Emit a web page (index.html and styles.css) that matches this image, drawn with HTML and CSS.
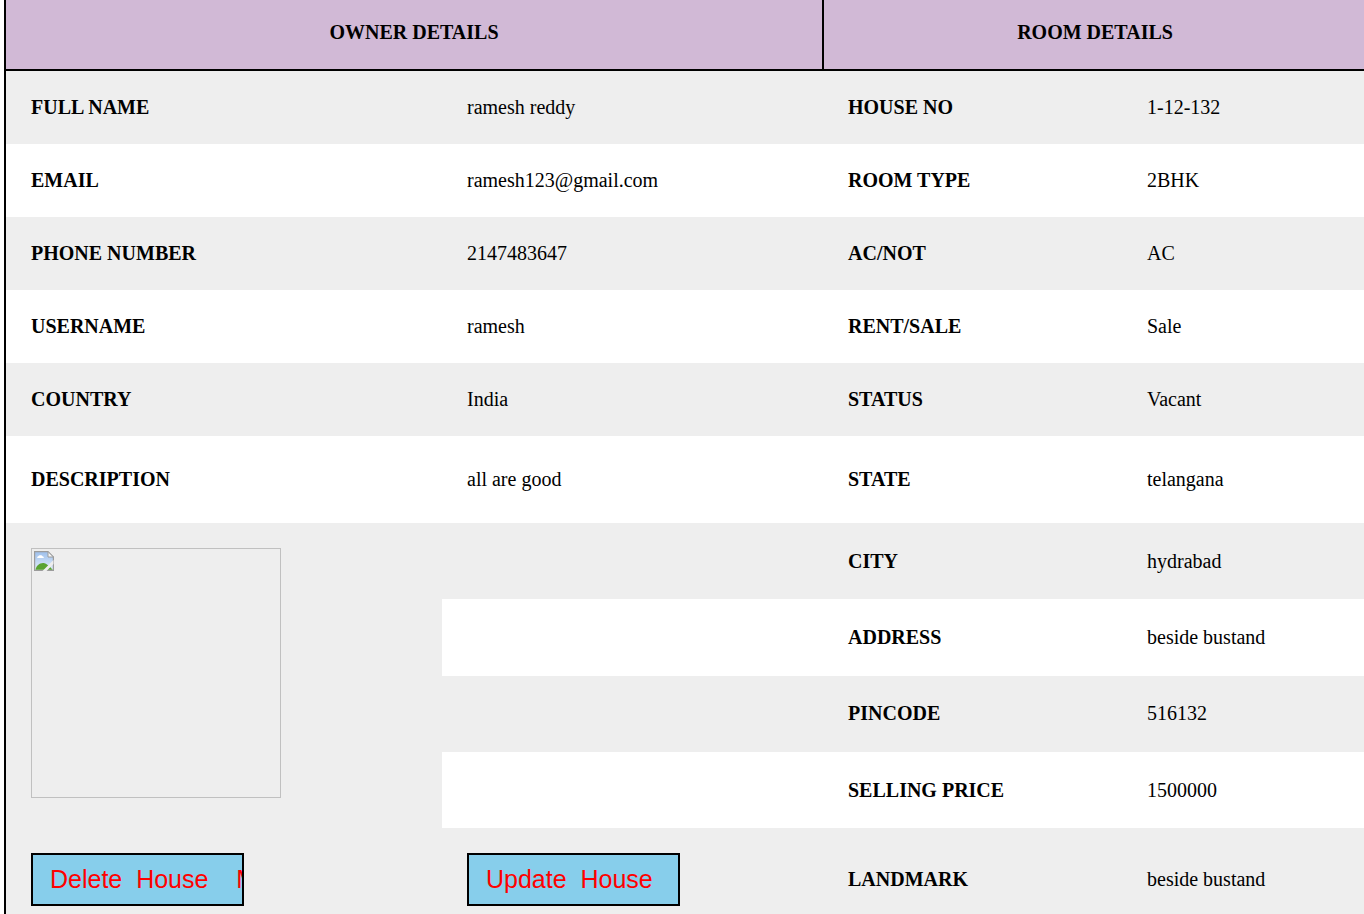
FILE: index.html
```html
<!DOCTYPE html>
<html lang="en">
<head>
<meta charset="utf-8">
<title>House Details</title>
<link rel="stylesheet" href="styles.css">
</head>
<body>
<table class="details">
  <colgroup>
    <col class="col-a"><col class="col-b"><col class="col-c"><col class="col-d">
  </colgroup>
  <thead>
    <tr class="head-row">
      <th colspan="2" class="head-owner">OWNER DETAILS</th>
      <th colspan="2" class="head-room">ROOM DETAILS</th>
    </tr>
  </thead>
  <tbody>
    <tr class="r73 grey"><th>FULL NAME</th><td>ramesh reddy</td><th>HOUSE NO</th><td>1-12-132</td></tr>
    <tr class="r73"><th>EMAIL</th><td>ramesh123@gmail.com</td><th>ROOM TYPE</th><td>2BHK</td></tr>
    <tr class="r73 grey"><th>PHONE NUMBER</th><td>2147483647</td><th>AC/NOT</th><td>AC</td></tr>
    <tr class="r73"><th>USERNAME</th><td>ramesh</td><th>RENT/SALE</th><td>Sale</td></tr>
    <tr class="r73 grey"><th>COUNTRY</th><td>India</td><th>STATUS</th><td>Vacant</td></tr>
    <tr class="r87"><th>DESCRIPTION</th><td>all are good</td><th>STATE</th><td>telangana</td></tr>
    <tr class="r76 grey">
      <td rowspan="4" class="photo-cell">
        <div class="photo">
          <svg class="broken" viewBox="0 0 20 20" width="20" height="20" aria-hidden="true">
            <defs>
              <linearGradient id="sky" x1="0" y1="0" x2="0" y2="1">
                <stop offset="0" stop-color="#9dbfec"/>
                <stop offset="1" stop-color="#e4eefa"/>
              </linearGradient>
            </defs>
            <path d="M.6.6h13.400l5.400 5.400v13.400H.6z" fill="url(#sky)" stroke="#9c9c9c" stroke-width="1.200"/>
            <path d="M14 .6v5.400h5.400z" fill="#f6f6f6" stroke="#9c9c9c" stroke-width="1"/>
            <path d="M4 5.500c1-1.600 3.800-1.600 4.800 0 1.200.1 1.500 1.200.5 1.500H3.800c-1-.2-.9-1.300.2-1.500z" fill="#fff"/>
            <path d="M1.500 18.800c.8-4.500 5-7.500 9-6.500 2 .5 5.500 3.500 8.300 6.500z" fill="#5aa332"/>
            <path d="M8.500 20 19.500 9v4l-7 7z" fill="#eee"/>
          </svg>
        </div>
      </td>
      <td></td><th>CITY</th><td>hydrabad</td>
    </tr>
    <tr class="r76"><td class="white"></td><th>ADDRESS</th><td>beside bustand</td></tr>
    <tr class="r76 r76-wide grey"><td></td><th>PINCODE</th><td>516132</td></tr>
    <tr class="r76 r76-narrow"><td class="white"></td><th>SELLING PRICE</th><td>1500000</td></tr>
    <tr class="grey">
      <td><button class="action" type="button">Delete  House    Mark</button></td>
      <td><button class="action" type="button">Update  House</button></td>
      <th>LANDMARK</th><td>beside bustand</td>
    </tr>
  </tbody>
</table>
</body>
</html>
```
FILE: styles.css
```css
html {
  height: 914px;
  overflow: hidden;
}
body {
  margin: 0;
  padding-left: 4px;
  background: #fff;
  font-family: "Liberation Serif", "Times New Roman", serif;
  font-size: 20px;
  color: #000;
}
.details {
  width: 1362px;
  table-layout: fixed;
  border-collapse: separate;
  border-spacing: 0;
  border-left: 2px solid #000;
}
.col-a { width: 436px; }
.col-b { width: 381px; }
.col-c { width: 299px; }
.col-d { width: 244px; }
.details th,
.details td {
  padding: 25px;
  text-align: left;
  vertical-align: middle;
  font-size: 20px;
  line-height: 23px;
}
.details td { font-weight: 400; }
.details th { font-weight: 700; }
.head-row { height: 71px; }
.details .head-row th {
  background: #d1b9d6;
  padding: 0 0 4px;
  text-align: center;
  border-bottom: 2px solid #000;
}
.details .head-row .head-owner { box-shadow: inset -1px 0 0 #000; padding-right: 1px; }
.details .head-row .head-room { box-shadow: inset 1px 0 0 #000; padding-left: 1px; }
.grey { background: #eee; }
.white { background: #fff; }
.r73 { height: 73px; }
.r87 { height: 87px; }
.r76 { height: 76.25px; }
.r76-wide { height: 76.5px; }
.r76-narrow { height: 76px; }
.details .r73 th, .details .r73 td,
.details .r76 th, .details .r76 td,
.details .r87 th, .details .r87 td {
  padding-top: 0;
  padding-bottom: 0;
}
.details .r76 .photo-cell {
  padding: 25px;
  vertical-align: top;
  background: #eee;
}
.photo {
  box-sizing: border-box;
  width: 250px;
  height: 250px;
  border: 1px solid #c0c0c0;
  padding: 2px;
}
.broken { display: block; }
.action {
  display: block;
  box-sizing: border-box;
  width: 213px;
  height: 53px;
  padding: 0 0 0 17px;
  margin: 0;
  overflow: hidden;
  white-space: pre;
  text-align: left;
  background: #87ceeb;
  border: 2px solid #000;
  color: #f00;
  font-family: "Liberation Sans", Arial, sans-serif;
  font-size: 25px;
}
```
